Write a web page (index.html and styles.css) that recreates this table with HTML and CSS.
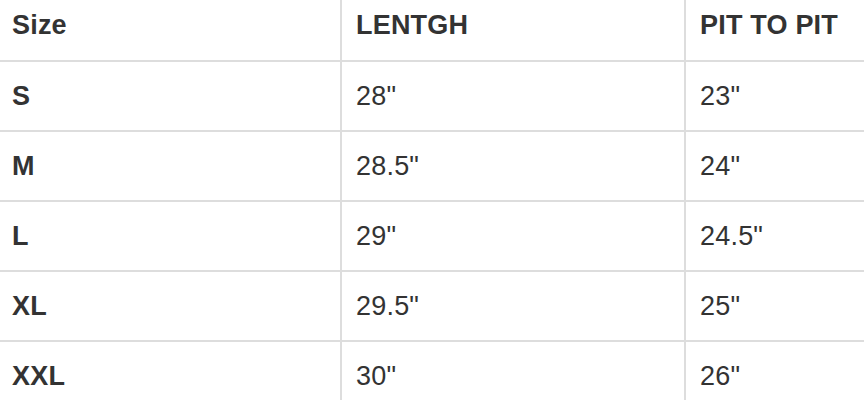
FILE: index.html
```html
<!DOCTYPE html>
<html>
<head>
<meta charset="utf-8">
<link rel="stylesheet" href="styles.css">
</head>
<body>
<div class="size-table">
  <div class="cell head first">Size</div>
  <div class="cell head">LENTGH</div>
  <div class="cell head">PIT TO PIT</div>

  <div class="cell label first">S</div>
  <div class="cell">28"</div>
  <div class="cell">23"</div>

  <div class="cell label first">M</div>
  <div class="cell">28.5"</div>
  <div class="cell">24"</div>

  <div class="cell label first">L</div>
  <div class="cell">29"</div>
  <div class="cell">24.5"</div>

  <div class="cell label first">XL</div>
  <div class="cell">29.5"</div>
  <div class="cell">25"</div>

  <div class="cell label first">XXL</div>
  <div class="cell">30"</div>
  <div class="cell">26"</div>
</div>
</body>
</html>
```
FILE: styles.css
```css
html, body {
  margin: 0;
  padding: 0;
  background: #ffffff;
}
body {
  font-family: "Liberation Sans", Arial, sans-serif;
  color: #333333;
  overflow: hidden;
}
.size-table {
  display: grid;
  grid-template-columns: 340px 344px 180px;
  grid-auto-rows: 70px;
  grid-template-rows: 60px;
}
.cell {
  display: flex;
  align-items: center;
  padding: 0 0 0 14px;
  font-size: 27px;
  letter-spacing: 0.2px;
  border-top: 2px solid #dddddd;
  border-left: 2px solid #dddddd;
}
.cell.first {
  border-left: none;
  padding-left: 12px;
}
.head {
  border-top: none;
  font-weight: bold;
  padding-bottom: 9px;
}
.label {
  font-weight: bold;
}
```
